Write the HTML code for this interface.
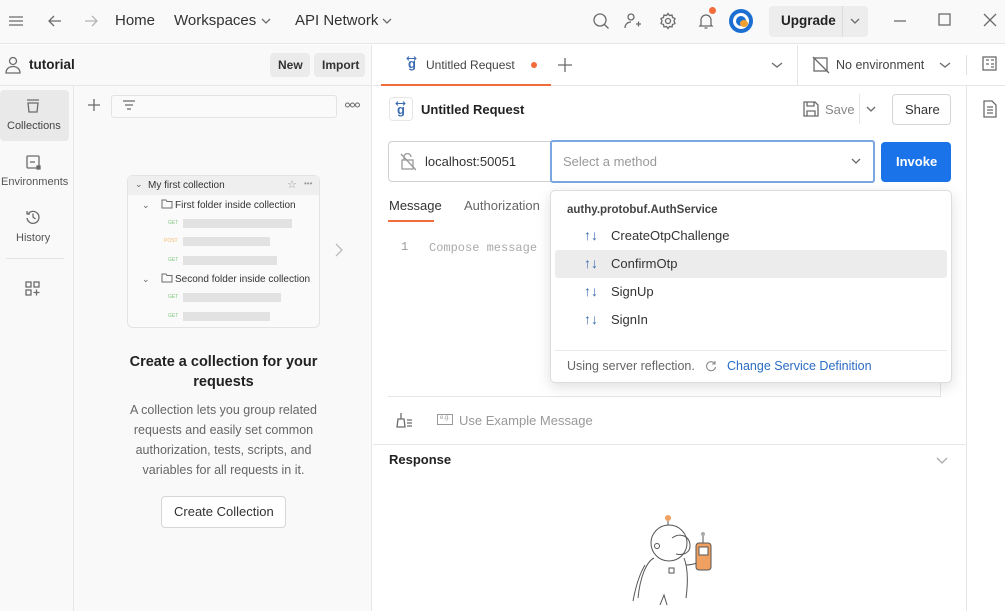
<!DOCTYPE html>
<html><head><meta charset="utf-8"><style>
*{box-sizing:border-box;margin:0;padding:0}
body{width:1005px;height:611px;overflow:hidden;background:#fff;font-family:"Liberation Sans",sans-serif;color:#212121;position:relative;font-size:13px}
.a{position:absolute}
svg{position:absolute;fill:none;stroke:#6b6b6b;stroke-width:1.3}
.t{position:absolute;white-space:nowrap}
</style></head><body>
<!-- top bar -->
<div class="a" style="left:0;top:0;width:1005px;height:44px;background:#f9f9f9;border-bottom:1px solid #e6e6e6"></div>
<svg style="left:8px;top:13px" width="16" height="16"><path d="M1 4h14M1 8h14M1 12h14"/></svg>
<svg style="left:47px;top:13px" width="16" height="16"><path d="M14 8H2M7 3L2 8l5 5"/></svg>
<svg style="left:83px;top:13px" width="16" height="16"><path d="M2 8h12M9 3l5 5-5 5" stroke="#b5b5b5"/></svg>
<div class="t" style="left:115px;top:12px;font-size:15px;color:#333">Home</div>
<div class="t" style="left:174px;top:12px;font-size:15px;color:#333">Workspaces</div>
<svg style="left:261px;top:17px" width="10" height="8"><path d="M1 2l4 4 4-4"/></svg>
<div class="t" style="left:295px;top:12px;font-size:15px;color:#333">API Network</div>
<svg style="left:382px;top:17px" width="10" height="8"><path d="M1 2l4 4 4-4"/></svg>
<svg style="left:592px;top:12px" width="18" height="18"><circle cx="8" cy="8" r="6"/><path d="M12.5 12.5l4 4"/></svg>
<svg style="left:624px;top:12px" width="18" height="18"><circle cx="7" cy="5" r="3"/><path d="M1 16c0-4 3-6 6-6M12 12h5M14.5 9.5v5"/></svg>
<svg style="left:659px;top:12px" width="18" height="18"><circle cx="9" cy="9" r="2.5"/><path d="M9 1.5l1.5 2 2.5-.5.5 2.5 2.5 1-1 2.5 1 2.5-2.5 1-.5 2.5-2.5-.5L9 16.5l-1.5-2-2.5.5-.5-2.5-2.5-1 1-2.5-1-2.5 2.5-1L5 3l2.5.5z"/></svg>
<svg style="left:697px;top:12px" width="18" height="18"><path d="M4 13V8a5 5 0 0110 0v5l1 1H3zM7.5 16h3"/></svg>
<div class="a" style="left:709px;top:7px;width:7px;height:7px;border-radius:50%;background:#f26b3a"></div>
<div class="a" style="left:729px;top:9px;width:24px;height:24px;border-radius:50%;background:#1c6fd0"></div>
<div class="a" style="left:733px;top:13px;width:16px;height:16px;border-radius:50%;background:#fff"></div>
<div class="a" style="left:736px;top:16px;width:10px;height:10px;border-radius:50%;background:#1c6fd0"></div>
<div class="a" style="left:740px;top:20px;width:8px;height:7px;border-radius:50%;background:#f0a030"></div>
<div class="a" style="left:769px;top:6px;width:99px;height:31px;background:#ededed;border-radius:4px"></div>
<div class="a" style="left:842px;top:6px;width:1px;height:31px;background:#ddd"></div>
<div class="t" style="left:781px;top:13px;font-size:13.5px;font-weight:bold;color:#222">Upgrade</div>
<svg style="left:850px;top:17px" width="10" height="8"><path d="M1 2l4 4 4-4"/></svg>
<svg style="left:892px;top:14px" width="16" height="16"><path d="M2 7h12"/></svg>
<svg style="left:937px;top:12px" width="16" height="16"><rect x="2" y="2" width="11" height="11"/></svg>
<svg style="left:982px;top:12px" width="16" height="16"><path d="M2 2l12 12M14 2L2 14"/></svg>

<!-- sidebar -->
<div class="a" style="left:0;top:45px;width:372px;height:566px;background:#f9f9f9;border-right:1px solid #e6e6e6"></div>
<div class="a" style="left:0;top:85px;width:372px;height:1px;background:#e6e6e6"></div>
<div class="a" style="left:73px;top:86px;width:1px;height:525px;background:#e6e6e6"></div>
<svg style="left:5px;top:56px" width="16" height="18"><circle cx="8" cy="5" r="3.5"/><path d="M1 17c0-4 3-6.5 7-6.5s7 2.5 7 6.5z"/></svg>
<div class="t" style="left:29px;top:57px;font-size:13.5px;font-weight:bold">tutorial</div>
<div class="a" style="left:270px;top:53px;width:40px;height:24px;background:#ebebeb;border-radius:4px"></div>
<div class="t" style="left:278px;top:58px;font-size:12px;font-weight:bold;color:#333">New</div>
<div class="a" style="left:314px;top:53px;width:51px;height:24px;background:#ebebeb;border-radius:4px"></div>
<div class="t" style="left:322px;top:58px;font-size:12px;font-weight:bold;color:#333">Import</div>

<div class="a" style="left:0;top:90px;width:69px;height:51px;background:#e9e9e9;border-radius:4px"></div>
<svg style="left:25px;top:98px" width="16" height="16"><path d="M2 2h12M3 5h10l-1 9H4z"/></svg>
<div class="t" style="left:7px;top:120px;font-size:11px;color:#444">Collections</div>
<svg style="left:25px;top:154px" width="16" height="16"><rect x="2" y="2" width="12" height="12" rx="1"/><path d="M5 8h5"/><rect x="12" y="12" width="3" height="3" fill="#6b6b6b"/></svg>
<div class="t" style="left:1px;top:176px;font-size:11px;color:#555">Environments</div>
<svg style="left:25px;top:209px" width="16" height="16"><path d="M3 5a6 6 0 11-1 4M2 2v3h3M8 4.5V8l2.5 2"/></svg>
<div class="t" style="left:16px;top:232px;font-size:11px;color:#555">History</div>
<div class="a" style="left:6px;top:258px;width:58px;height:1px;background:#e3e3e3"></div>
<svg style="left:25px;top:281px" width="16" height="16"><rect x="1" y="1" width="5" height="5"/><rect x="9" y="1" width="5" height="5"/><rect x="1" y="9" width="5" height="5"/><path d="M11.5 8.5v6M8.5 11.5h6"/></svg>

<svg style="left:86px;top:97px" width="16" height="16"><path d="M8 2v12M2 8h12"/></svg>
<div class="a" style="left:111px;top:95px;width:226px;height:23px;border:1px solid #e3e3e3;border-radius:3px;background:#fafafa"></div>
<svg style="left:121px;top:99px" width="16" height="14"><path d="M2 2h12M4 6h8M6 10h4"/></svg>
<svg style="left:345px;top:102px;stroke-width:1" width="16" height="6"><circle cx="2.5" cy="3" r="2"/><circle cx="7.5" cy="3" r="2"/><circle cx="12.5" cy="3" r="2"/></svg>

<!-- collection preview -->
<div class="a" style="left:127px;top:175px;width:193px;height:153px;border:1px solid #e3e3e3;border-radius:6px;background:#fafafa"></div>
<div class="a" style="left:128px;top:176px;width:191px;height:19px;background:#efefef"></div>
<div class="t" style="left:135px;top:179px;font-size:9px;color:#666">⌄</div>
<div class="t" style="left:148px;top:180px;font-size:10px;color:#333">My first collection</div>
<div class="t" style="left:287px;top:178px;font-size:11px;color:#999">☆</div>
<div class="t" style="left:304px;top:179px;font-size:8px;color:#999">•••</div>
<div class="t" style="left:142px;top:200px;font-size:9px;color:#666">⌄</div>
<svg style="left:161px;top:199px;stroke-width:1" width="12" height="10"><path d="M1 1h4l1 1.5h5V9H1z"/></svg>
<div class="t" style="left:175px;top:200px;font-size:10px;color:#333">First folder inside collection</div>
<div class="t" style="left:168px;top:220px;font-size:5px;color:#7fc87f">GET</div>
<div class="a" style="left:183px;top:219px;width:109px;height:9px;background:#e2e2e2"></div>
<div class="t" style="left:164px;top:238px;font-size:5px;color:#f4b96a">POST</div>
<div class="a" style="left:183px;top:237px;width:87px;height:9px;background:#e2e2e2"></div>
<div class="t" style="left:168px;top:257px;font-size:5px;color:#7fc87f">GET</div>
<div class="a" style="left:183px;top:256px;width:94px;height:9px;background:#e2e2e2"></div>
<div class="t" style="left:142px;top:274px;font-size:9px;color:#666">⌄</div>
<svg style="left:161px;top:273px;stroke-width:1" width="12" height="10"><path d="M1 1h4l1 1.5h5V9H1z"/></svg>
<div class="t" style="left:175px;top:274px;font-size:10px;color:#333">Second folder inside collection</div>
<div class="t" style="left:168px;top:294px;font-size:5px;color:#7fc87f">GET</div>
<div class="a" style="left:183px;top:293px;width:98px;height:9px;background:#e2e2e2"></div>
<div class="t" style="left:168px;top:313px;font-size:5px;color:#7fc87f">GET</div>
<div class="a" style="left:183px;top:312px;width:87px;height:9px;background:#e2e2e2"></div>
<svg style="left:334px;top:243px;stroke:#bbb" width="10" height="14"><path d="M2 1l6 6-6 6"/></svg>

<div class="a" style="left:100px;top:352px;width:247px;text-align:center;font-size:14.5px;font-weight:bold;line-height:20px;color:#222">Create a collection for your<br>requests</div>
<div class="a" style="left:110px;top:400px;width:227px;text-align:center;font-size:12.5px;line-height:20px;color:#666">A collection lets you group related requests and easily set common authorization, tests, scripts, and variables for all requests in it.</div>
<div class="a" style="left:161px;top:496px;width:125px;height:32px;border:1px solid #d6d6d6;border-radius:4px;background:#fff"></div>
<div class="t" style="left:174px;top:504px;font-size:13px;color:#333">Create Collection</div>

<!-- tabs row -->
<div class="a" style="left:373px;top:85px;width:632px;height:1px;background:#e6e6e6"></div>
<div class="a" style="left:381px;top:84px;width:170px;height:2px;background:#f26b3a"></div>
<div class="t" style="left:408px;top:56px;font-size:13px;color:#3b6ab0;font-weight:bold">g</div>
<svg style="left:406px;top:56px;stroke:#3b6ab0;stroke-width:1" width="12" height="5"><path d="M1 2.5h9M3 .5l-2 2 2 2M8 .5l2 2-2 2"/></svg>
<div class="t" style="left:426px;top:58px;font-size:12px;color:#444">Untitled Request</div>
<div class="a" style="left:531px;top:62px;width:6px;height:6px;border-radius:50%;background:#f26b3a"></div>
<svg style="left:557px;top:57px" width="16" height="16"><path d="M8 1v14M1 8h14"/></svg>
<svg style="left:771px;top:61px" width="12" height="8"><path d="M1 2l5 4 5-4"/></svg>
<div class="a" style="left:797px;top:45px;width:1px;height:40px;background:#e6e6e6"></div>
<svg style="left:812px;top:56px" width="18" height="18"><rect x="2" y="2" width="13" height="13"/><path d="M1 1l16 16"/></svg>
<div class="t" style="left:836px;top:58px;font-size:12.5px;color:#444">No environment</div>
<svg style="left:939px;top:61px" width="12" height="8"><path d="M1 2l5 4 5-4"/></svg>
<div class="a" style="left:966px;top:55px;width:1px;height:20px;background:#e0e0e0"></div>
<svg style="left:982px;top:56px" width="16" height="16"><rect x="1" y="1" width="13" height="13"/><path d="M4 4h3M9 4h3M4 8h3M9 8h3M9 11h3"/></svg>
<div class="a" style="left:966px;top:86px;width:1px;height:525px;background:#e6e6e6"></div>
<svg style="left:983px;top:100px" width="14" height="18"><path d="M1 1h8l4 4v12H1zM4 7h6M4 10h6M4 13h6"/></svg>

<!-- request header -->
<div class="a" style="left:389px;top:97px;width:24px;height:24px;border:1px solid #e6e6e6;border-radius:4px"></div>
<div class="t" style="left:397px;top:102px;font-size:13px;color:#3b6ab0;font-weight:bold">g</div>
<svg style="left:395px;top:101px;stroke:#3b6ab0;stroke-width:1" width="12" height="5"><path d="M1 2.5h9M3 .5l-2 2 2 2M8 .5l2 2-2 2"/></svg>
<div class="t" style="left:421px;top:102px;font-size:13px;font-weight:bold;color:#222">Untitled Request</div>
<svg style="left:803px;top:101px" width="16" height="16"><path d="M1 1h11l3 3v11H1zM4 1v4h7V1M4 15v-5h8v5"/></svg>
<div class="t" style="left:825px;top:102px;font-size:13px;color:#888">Save</div>
<div class="a" style="left:859px;top:94px;width:1px;height:30px;background:#e6e6e6"></div>
<svg style="left:866px;top:106px" width="10" height="7"><path d="M1 1l4 4 4-4"/></svg>
<div class="a" style="left:892px;top:94px;width:59px;height:31px;border:1px solid #d6d6d6;border-radius:4px"></div>
<div class="t" style="left:905px;top:102px;font-size:13px;color:#333">Share</div>

<!-- url bar -->
<div class="a" style="left:388px;top:141px;width:164px;height:41px;border:1px solid #d0d0d0;border-radius:4px 0 0 4px"></div>
<svg style="left:400px;top:153px;stroke:#999" width="16" height="18"><rect x="2" y="7" width="11" height="9"/><path d="M4 7V4a3.5 3.5 0 017 0M1 1l15 16"/></svg>
<div class="t" style="left:425px;top:154px;font-size:13px;color:#333">localhost:50051</div>
<div class="a" style="left:550px;top:140px;width:325px;height:43px;border:2px solid #7aa7e0;border-radius:3px"></div>
<div class="t" style="left:563px;top:154px;font-size:13px;color:#999">Select a method</div>
<svg style="left:851px;top:158px" width="10" height="7"><path d="M1 1l4 4 4-4"/></svg>
<div class="a" style="left:881px;top:142px;width:70px;height:40px;background:#1a73e8;border-radius:4px"></div>
<div class="t" style="left:896px;top:154px;font-size:13px;font-weight:bold;color:#fff">Invoke</div>

<!-- message tabs -->
<div class="t" style="left:389px;top:198px;font-size:13px;color:#333">Message</div>
<div class="a" style="left:388px;top:220px;width:46px;height:2px;background:#f26b3a"></div>
<div class="t" style="left:464px;top:198px;font-size:13px;color:#666">Authorization</div>
<div class="t" style="left:401px;top:240px;font-family:'Liberation Mono',monospace;font-size:12px;color:#999">1</div>
<div class="t" style="left:429px;top:241px;font-family:'Liberation Mono',monospace;font-size:12px;color:#aaa">Compose message</div>
<div class="a" style="left:388px;top:396px;width:553px;height:1px;background:#e6e6e6"></div>
<div class="a" style="left:940px;top:210px;width:1px;height:187px;background:#e6e6e6"></div>
<svg style="left:396px;top:412px" width="18" height="16"><path d="M5 1v6M2 7h6l1 8H1zM11 8h5M11 11h5M11 14h5"/></svg>
<svg style="left:437px;top:414px;stroke:#999;stroke-width:1" width="17" height="12"><rect x=".5" y=".5" width="15" height="10"/></svg>
<div class="t" style="left:440px;top:415px;font-size:6px;color:#999">e.g.</div>
<div class="t" style="left:459px;top:413px;font-size:13px;color:#999">Use Example Message</div>
<div class="a" style="left:373px;top:444px;width:593px;height:1px;background:#e6e6e6"></div>
<div class="t" style="left:389px;top:452px;font-size:13px;font-weight:bold;color:#222">Response</div>
<svg style="left:936px;top:457px;stroke:#aaa" width="12" height="8"><path d="M1 1l5 5 5-5"/></svg>

<!-- astronaut -->
<svg style="left:620px;top:510px;stroke:#555;stroke-width:1" width="110" height="101">
<circle cx="48" cy="8" r="3" fill="#f0a060" stroke="none"/><path d="M48 11v4"/>
<circle cx="49" cy="33" r="18"/><path d="M52 28c8-6 18-2 18 8 0 6-6 10-14 8"/><circle cx="37" cy="36" r="2.5"/>
<rect x="49" y="58" width="5" height="5"/><path d="M34 48c-8 4-14 20-16 40M64 48c4 10 4 25 2 40M66 55c8 0 18-4 20-8M25 55c-6 10-10 25-12 36M40 95l4-10 3 10"/>
<rect x="76" y="33" width="15" height="27" rx="3" fill="#f0a060"/><rect x="79" y="37" width="9" height="8" fill="#fff"/><path d="M83 33v-8"/><circle cx="83" cy="24" r="2" fill="#aaa" stroke="none"/>
</svg>

<!-- dropdown -->
<div class="a" style="left:550px;top:190px;width:402px;height:193px;background:#fff;border:1px solid #ddd;border-radius:5px;box-shadow:0 4px 14px rgba(0,0,0,.13)"></div>
<div class="t" style="left:567px;top:204px;font-size:11.5px;font-weight:bold;color:#444">authy.protobuf.AuthService</div>
<div class="a" style="left:555px;top:250px;width:392px;height:28px;background:#ececec;border-radius:3px"></div>
<div class="t" style="left:584px;top:227px;font-size:14px;color:#3b6ab0">↑↓</div><div class="t" style="left:611px;top:228px;font-size:13px;color:#333">CreateOtpChallenge</div>
<div class="t" style="left:584px;top:255px;font-size:14px;color:#3b6ab0">↑↓</div><div class="t" style="left:611px;top:256px;font-size:13px;color:#333">ConfirmOtp</div>
<div class="t" style="left:584px;top:283px;font-size:14px;color:#3b6ab0">↑↓</div><div class="t" style="left:611px;top:284px;font-size:13px;color:#333">SignUp</div>
<div class="t" style="left:584px;top:311px;font-size:14px;color:#3b6ab0">↑↓</div><div class="t" style="left:611px;top:312px;font-size:13px;color:#333">SignIn</div>
<div class="a" style="left:555px;top:350px;width:392px;height:1px;background:#e8e8e8"></div>
<div class="t" style="left:567px;top:359px;font-size:12.5px;color:#666">Using server reflection.</div>
<svg style="left:705px;top:360px;stroke:#888;stroke-width:1.1" width="12" height="12"><path d="M10 4a4.5 4.5 0 10.5 3M10 1v3H7"/></svg>
<div class="t" style="left:727px;top:359px;font-size:12.5px;color:#2b6cc4">Change Service Definition</div>
</body></html>
